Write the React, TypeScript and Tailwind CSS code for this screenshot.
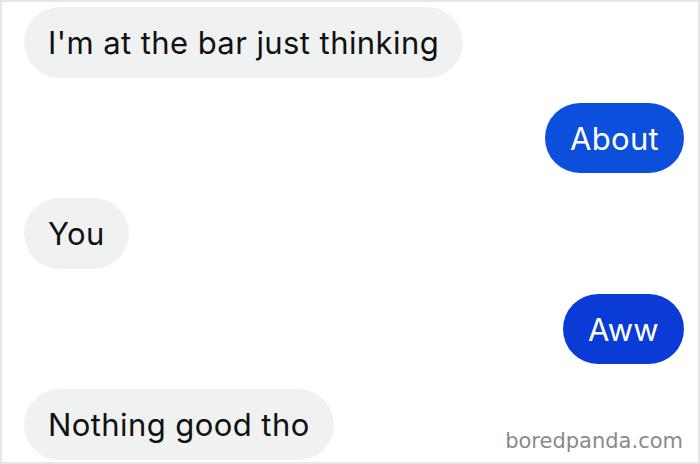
import React from "react";

const font = { fontFamily: 'Inter, "Liberation Sans", Arial, sans-serif' };

function Left({ text, ml = "ml-[22px]" }: { text: string; ml?: string }) {
  return (
    <div className={`flex ${ml}`}>
      <div className="h-[71px] flex items-center px-[24px] rounded-full bg-[#f0f1f1] text-[#111111] text-[31px] leading-none tracking-[0.42px]">
        {text}
      </div>
    </div>
  );
}

function Right({ text, bg }: { text: string; bg: string }) {
  return (
    <div className="flex justify-end mr-[14px]">
      <div className={`h-[70px] flex items-center px-[25px] rounded-full ${bg} text-white text-[31px] leading-none tracking-[0.3px]`}>
        {text}
      </div>
    </div>
  );
}

export default function App() {
  return (
    <div
      className="w-[700px] h-[464px] bg-white border-t-2 border-l-2 border-r-2 border-b-2 border-[#e6e6e6] flex flex-col gap-[25px] pt-[5px] relative overflow-hidden"
      style={font}
    >
      <Left text="I'm at the bar just thinking" />
      <Right text="About" bg="bg-[#0b4fdc]" />
      <Left text="You" />
      <Right text="Aww" bg="bg-[#0a3bd6]" />
      <Left text="Nothing good tho" />
      <div
        className="absolute right-[15px] bottom-[10px] text-[21px] leading-none text-[#8a8a8a]"
        style={{ fontFamily: '"DejaVu Sans", sans-serif' }}
      >
        boredpanda.com
      </div>
    </div>
  );
}
